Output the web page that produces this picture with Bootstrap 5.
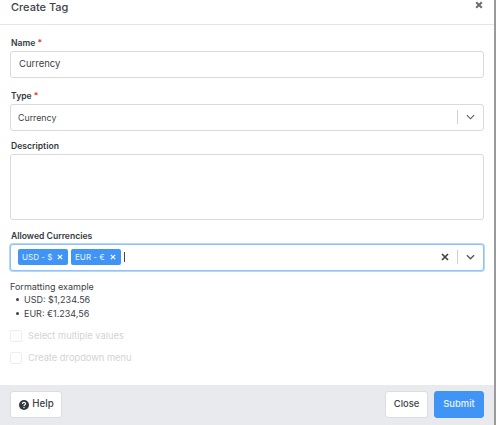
<!doctype html>
<html lang="en">
<head>
<meta charset="utf-8">
<title>Create Tag</title>
<link href="https://cdn.jsdelivr.net/npm/bootstrap@5.3.0/dist/css/bootstrap.min.css" rel="stylesheet">
<style>
html,body{height:425px;overflow:hidden;background:#fff}
body{font-family:Inter,"Liberation Sans",sans-serif;font-size:9.5px;color:#343a40}
.sheet{width:496px;height:425px;border-right:2px solid #9a9a9a;display:flex;flex-direction:column}
.head{height:25px;border-bottom:1.5px solid #e3e4e6;padding:0 10px;display:flex;justify-content:space-between}
.head-title{font-size:11px;font-weight:500;line-height:14px;color:#3c4248;padding-left:1px}
.head-x{width:8px;height:8px;margin-top:1px;margin-right:1px;color:#6c7075}
.body-wrap{flex:1;padding:0 10px;min-height:0}
.lbl{display:block;font-size:8.6px;font-weight:600;line-height:12px;margin:0 0 2px;color:#343a40;padding-left:1px}
.req{color:#d63a3a}
.fld{height:26.500px;border:1px solid #d9dadc;border-radius:3px;display:flex;align-items:center;width:474px;background:#fff}
.inp{padding:0 8px;font-size:9.5px;color:#3c4248}
.sel-val{flex:1;padding-left:7px;font-size:8.800px;color:#3c4248}
.divi{width:1px;height:14px;background:#cfd0d3}
.chev{width:25px;display:flex;justify-content:center;color:#53575c}
.txta{height:66px;width:474px;border:1px solid #d9dadc;border-radius:3px}
.multi{border:1px solid #8fc1fb;box-shadow:0 0 0 1px #b6d7fd}
.chip{background:#3f94f6;color:#e9f3fe;font-size:8.100px;border-radius:2px;height:16px;display:flex;align-items:center;justify-content:space-between;padding:0 5px 0 4px;margin-right:3px;width:50px}
.chip-a{margin-left:7px}
.caret{width:1px;height:10px;background:#444}
.clr{color:#3f4449;margin-right:8px;display:flex}
.fmt{font-size:9px;line-height:13.500px;margin-top:9px;color:#3c4248}
.fmt ul{padding:0;margin:0;list-style:none}
.fmt li{display:flex;align-items:center}
.fmt li::before{content:"";width:3px;height:3px;border-radius:50%;background:#3c4248;margin:0 5px 0 6px}
.opt{display:flex;align-items:center;gap:6px;height:12px;font-size:9.300px;color:#d2d3d5}
.box{width:12px;height:12px;border:1px solid #eceded;border-radius:2px;background:#fff}
.foot{height:40px;background:#e9eaed;padding:6px 10px 7px;display:flex;justify-content:space-between}
.bt{height:27px;border-radius:3px;font-size:9.400px;font-weight:500;padding:0;display:flex;align-items:center;justify-content:center;gap:3px;border:1px solid #dcdde0;background:#fff;color:#3c4248}
.bt-help{width:52px;font-size:9.700px;padding-left:1px}
.bt-close{width:43px}
.bt-sub{width:50px;background:#3f94f6;border-color:#3f94f6;color:#eaf4ff}
.sp-name{margin-top:12px}
.sp-type{margin-top:12.500px}
.sp-desc1{margin-top:9.500px}
.sp-desc{margin-top:10px}
.sp-opt1{margin-top:10px}
.sp-opt2{margin-top:10px}
.btn-row{gap:6px}
</style>
</head>
<body>
<div class="sheet">
  <div class="head">
    <div class="head-title">Create Tag</div>
    <svg class="head-x" viewBox="0 0 10 10"><path d="M1.500 1.500L8.500 8.500M8.500 1.500L1.500 8.500" stroke="currentColor" stroke-width="2.600"/></svg>
  </div>
  <div class="body-wrap">
    <label class="lbl sp-name">Name <span class="req">*</span></label>
    <div class="fld inp">Currency</div>

    <label class="lbl sp-type">Type <span class="req">*</span></label>
    <div class="fld">
      <div class="sel-val">Currency</div>
      <div class="divi"></div>
      <div class="chev"><svg width="9" height="6" viewBox="0 0 10 6"><path d="M1 1l4 4 4-4" fill="none" stroke="currentColor" stroke-width="1.200"/></svg></div>
    </div>

    <label class="lbl sp-desc1">Description</label>
    <div class="txta"></div>

    <label class="lbl sp-desc">Allowed Currencies</label>
    <div class="fld multi">
      <div class="chip chip-a"><span>USD - $</span><svg width="6" height="6" viewBox="0 0 6 6"><path d="M.8.8l4.400 4.400M5.200.8L.8 5.200" stroke="#fff" stroke-width="1.200"/></svg></div>
      <div class="chip"><span>EUR - €</span><svg width="6" height="6" viewBox="0 0 6 6"><path d="M.8.8l4.400 4.400M5.200.8L.8 5.200" stroke="#fff" stroke-width="1.200"/></svg></div>
      <div class="caret"></div>
      <div class="flex-grow-1"></div>
      <div class="clr"><svg width="8" height="8" viewBox="0 0 8 8"><path d="M1 1l6 6M7 1L1 7" stroke="currentColor" stroke-width="1.700"/></svg></div>
      <div class="divi"></div>
      <div class="chev"><svg width="9" height="6" viewBox="0 0 10 6"><path d="M1 1l4 4 4-4" fill="none" stroke="currentColor" stroke-width="1.500"/></svg></div>
    </div>

    <div class="fmt">
      Formatting example
      <ul><li>USD: $1,234.56</li><li>EUR: €1.234,56</li></ul>
    </div>

    <div class="opt sp-opt1"><span class="box"></span>Select multiple values</div>
    <div class="opt sp-opt2"><span class="box"></span>Create dropdown menu</div>
  </div>
  <div class="foot">
    <button class="bt bt-help" type="button"><svg width="10" height="10" viewBox="0 0 10 10"><circle cx="5" cy="5" r="5" fill="#33383d"/><path d="M3.400 3.900c0-2 3.200-2 3.200-.2 0 1.200-1.600 1-1.600 2.300" fill="none" stroke="#fff" stroke-width="1.100"/><circle cx="5" cy="7.500" r=".7" fill="#fff"/></svg>Help</button>
    <div class="d-flex btn-row">
      <button class="bt bt-close" type="button">Close</button>
      <button class="bt bt-sub" type="button">Submit</button>
    </div>
  </div>
</div>
<script src="https://cdn.jsdelivr.net/npm/bootstrap@5.3.0/dist/js/bootstrap.bundle.min.js"></script>
</body>
</html>
